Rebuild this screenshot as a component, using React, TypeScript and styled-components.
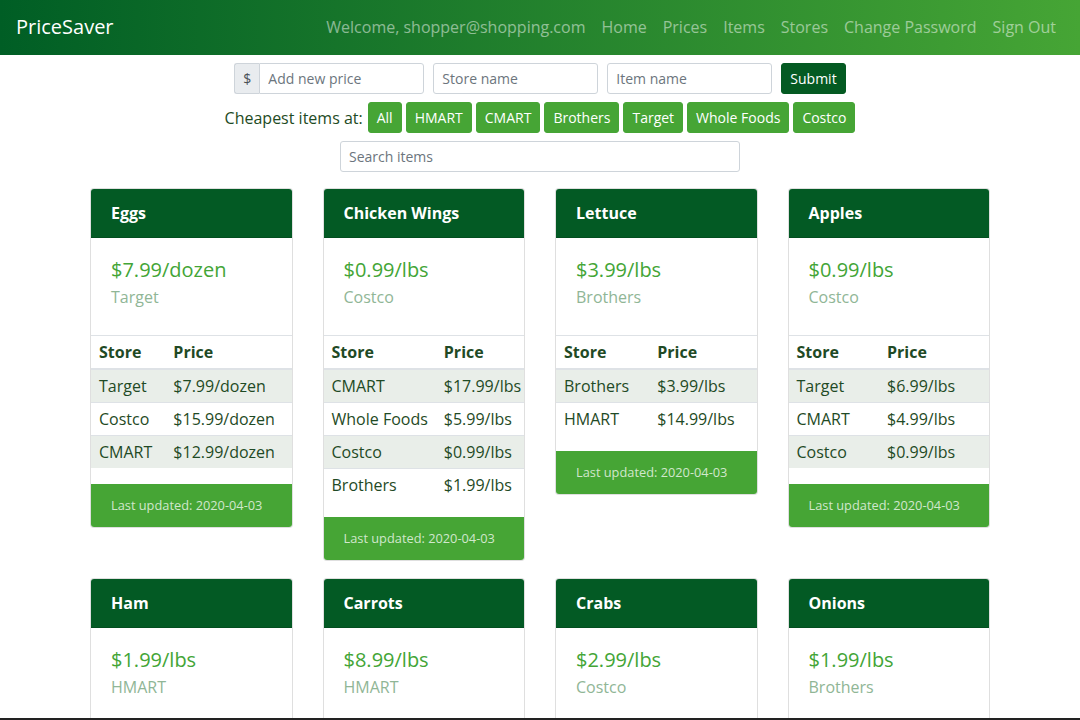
import styled, { createGlobalStyle } from 'styled-components';

const GlobalStyle = createGlobalStyle`
    * {
        box-sizing: border-box;
    }
    body {
        margin: 0;
        font-family: "Open Sans", "Liberation Sans", sans-serif;
        font-size: 16px;
        line-height: 1.5;
        color: #212529;
        background: #fff;
    }
`;

const Navbar = styled.nav`
    display: flex;
    align-items: center;
    justify-content: space-between;
    height: 55px;
    padding: 0 16px 1px;
    background: linear-gradient(to right, #005e25, #46a535);
`;

const Brand = styled.span`
    font-size: 20px;
    line-height: 30px;
    color: #fff;
`;

const NavLinks = styled.div`
    display: flex;
`;

const NavLink = styled.a`
    padding: 8px;
    color: rgba(255, 255, 255, 0.5);
    text-decoration: none;
`;

const Toolbar = styled.div`
    display: flex;
    flex-direction: column;
    align-items: center;
    gap: 8px;
    margin-top: 8px;
`;

const FormRow = styled.div`
    display: flex;
    align-items: center;
    gap: 9px;
`;

const InputGroup = styled.div`
    display: flex;
`;

const Prepend = styled.span`
    display: flex;
    align-items: center;
    justify-content: center;
    width: 25px;
    height: 31px;
    font-size: 14px;
    color: #495057;
    background: #e9ecef;
    border: 1px solid #ced4da;
    border-right: none;
    border-radius: 3px 0 0 3px;
`;

const Input = styled.input<{ $width: number; $joined?: boolean }>`
    width: ${({ $width }) => $width}px;
    height: 31px;
    padding: 4px 8px;
    font-family: inherit;
    font-size: 14px;
    color: #495057;
    border: 1px solid #ced4da;
    border-radius: ${({ $joined }) => ($joined ? '0 3px 3px 0' : '3px')};
    outline: none;
    &::placeholder {
        color: #6c757d;
    }
`;

const Button = styled.button<{ $dark?: boolean }>`
    height: 31px;
    padding: 4px 8px;
    font-family: inherit;
    font-size: 14px;
    line-height: 21px;
    color: #fff;
    background: ${({ $dark }) => ($dark ? '#045a22' : '#46a535')};
    border: 1px solid ${({ $dark }) => ($dark ? '#045a22' : '#46a535')};
    border-radius: 3px;
`;

const FilterRow = styled.div`
    display: flex;
    align-items: center;
    gap: 4px;
`;

const FilterLabel = styled.span`
    color: #1e4b24;
    margin-right: 1px;
`;

const CardGrid = styled.div`
    display: grid;
    grid-template-columns: repeat(4, 1fr);
    align-items: start;
    column-gap: 30px;
    row-gap: 17px;
    width: 930px;
    margin: 16px auto 0;
    padding: 0 15px;
`;

const Card = styled.div`
    border: 1px solid rgba(0, 0, 0, 0.125);
    border-radius: 4px;
    overflow: hidden;
    background: #fff;
`;

const CardHeader = styled.div`
    padding: 12px 20px;
    font-weight: 700;
    color: #fff;
    background: #035a24;
    border-bottom: 1px solid rgba(0, 0, 0, 0.125);
`;

const CardBody = styled.div`
    padding: 20px 20px 28px;
`;

const BestPrice = styled.div`
    font-size: 20px;
    line-height: 24px;
    color: #43a536;
    margin-bottom: 6px;
`;

const BestStore = styled.div`
    line-height: 19px;
    color: #90b696;
`;

const Table = styled.table`
    width: 100%;
    border-collapse: collapse;
    margin-bottom: 16px;
    color: #1f4a25;
`;

const Th = styled.th`
    padding: 4px 8px;
    text-align: left;
    font-weight: 700;
    border-top: 1px solid #dee2e6;
    border-bottom: 2px solid #dee2e6;
    white-space: nowrap;
`;

const Row = styled.tr`
    &:nth-child(odd) {
        background: #e9eee9;
    }
`;

const Td = styled.td`
    padding: 4px 8px;
    border-top: 1px solid #dee2e6;
    white-space: nowrap;
`;

const CardFooter = styled.div`
    padding: 12px 20px;
    font-size: 12.8px;
    line-height: 19px;
    color: rgba(255, 255, 255, 0.75);
    background: #46a535;
`;

const EdgeLine = styled.div`
    position: fixed;
    left: 0;
    right: 0;
    bottom: 0;
    height: 2px;
    background: #222;
`;

type Item = {
    name: string;
    best: string;
    store: string;
    prices: [string, string][];
};

const items: Item[] = [
    {
        name: 'Eggs',
        best: '$7.99/dozen',
        store: 'Target',
        prices: [
            ['Target', '$7.99/dozen'],
            ['Costco', '$15.99/dozen'],
            ['CMART', '$12.99/dozen'],
        ],
    },
    {
        name: 'Chicken Wings',
        best: '$0.99/lbs',
        store: 'Costco',
        prices: [
            ['CMART', '$17.99/lbs'],
            ['Whole Foods', '$5.99/lbs'],
            ['Costco', '$0.99/lbs'],
            ['Brothers', '$1.99/lbs'],
        ],
    },
    {
        name: 'Lettuce',
        best: '$3.99/lbs',
        store: 'Brothers',
        prices: [
            ['Brothers', '$3.99/lbs'],
            ['HMART', '$14.99/lbs'],
        ],
    },
    {
        name: 'Apples',
        best: '$0.99/lbs',
        store: 'Costco',
        prices: [
            ['Target', '$6.99/lbs'],
            ['CMART', '$4.99/lbs'],
            ['Costco', '$0.99/lbs'],
        ],
    },
    {
        name: 'Ham',
        best: '$1.99/lbs',
        store: 'HMART',
        prices: [
            ['HMART', '$1.99/lbs'],
            ['Target', '$3.49/lbs'],
        ],
    },
    {
        name: 'Carrots',
        best: '$8.99/lbs',
        store: 'HMART',
        prices: [['HMART', '$8.99/lbs']],
    },
    {
        name: 'Crabs',
        best: '$2.99/lbs',
        store: 'Costco',
        prices: [
            ['Costco', '$2.99/lbs'],
            ['HMART', '$9.99/lbs'],
        ],
    },
    {
        name: 'Onions',
        best: '$1.99/lbs',
        store: 'Brothers',
        prices: [['Brothers', '$1.99/lbs']],
    },
];

const stores = ['All', 'HMART', 'CMART', 'Brothers', 'Target', 'Whole Foods', 'Costco'];
const links = ['Welcome, shopper@shopping.com', 'Home', 'Prices', 'Items', 'Stores', 'Change Password', 'Sign Out'];

function ItemCard({ item }: { item: Item }) {
    return (
        <Card>
            <CardHeader>{item.name}</CardHeader>
            <CardBody>
                <BestPrice>{item.best}</BestPrice>
                <BestStore>{item.store}</BestStore>
            </CardBody>
            <Table>
                <thead>
                    <tr>
                        <Th>Store</Th>
                        <Th>Price</Th>
                    </tr>
                </thead>
                <tbody>
                    {item.prices.map(([store, price]) => (
                        <Row key={store}>
                            <Td>{store}</Td>
                            <Td>{price}</Td>
                        </Row>
                    ))}
                </tbody>
            </Table>
            <CardFooter>Last updated: 2020-04-03</CardFooter>
        </Card>
    );
}

export default function App() {
    return (
        <>
            <GlobalStyle />
            <Navbar>
                <Brand>PriceSaver</Brand>
                <NavLinks>
                    {links.map((link) => (
                        <NavLink key={link} href="#">
                            {link}
                        </NavLink>
                    ))}
                </NavLinks>
            </Navbar>
            <Toolbar>
                <FormRow>
                    <InputGroup>
                        <Prepend>$</Prepend>
                        <Input $width={165} $joined placeholder="Add new price" />
                    </InputGroup>
                    <Input $width={165} placeholder="Store name" />
                    <Input $width={165} placeholder="Item name" />
                    <Button $dark>Submit</Button>
                </FormRow>
                <FilterRow>
                    <FilterLabel>Cheapest items at:</FilterLabel>
                    {stores.map((store) => (
                        <Button key={store}>{store}</Button>
                    ))}
                </FilterRow>
                <Input $width={400} placeholder="Search items" />
            </Toolbar>
            <CardGrid>
                {items.map((item) => (
                    <ItemCard key={item.name} item={item} />
                ))}
            </CardGrid>
            <EdgeLine />
        </>
    );
}
